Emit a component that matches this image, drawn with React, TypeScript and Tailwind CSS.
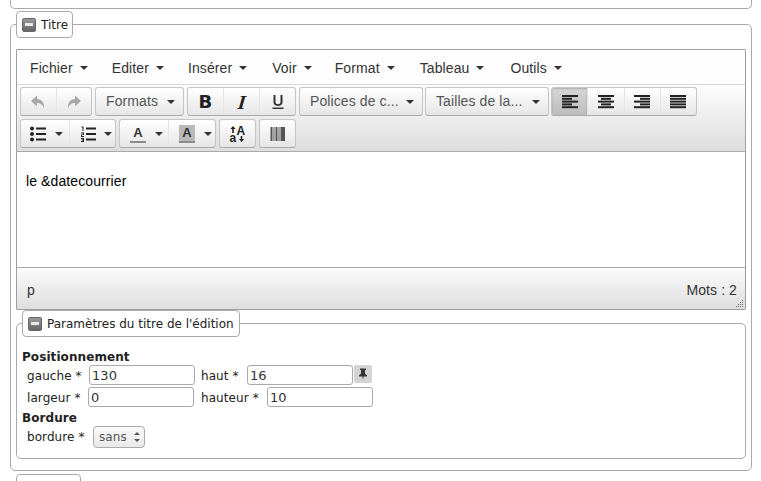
import React from 'react';

const dejavu = "font-['DejaVu_Sans',sans-serif]";
const btnFace = 'bg-gradient-to-b from-white to-[#e6e6e6]';

function Caret({ className = '' }: { className?: string }) {
    return <span className={`inline-block w-0 h-0 border-x-[4px] border-x-transparent border-t-[4px] border-t-[#333] ${className}`} />;
}

function Icon({ children, w = 16, h = 16, fill = '#333' }: { children: React.ReactNode; w?: number; h?: number; fill?: string }) {
    return (
        <svg width={w} height={h} viewBox={`0 0 ${w} ${h}`} fill={fill} className="block shrink-0">
            {children}
        </svg>
    );
}

function Group({ className = '', children }: { className?: string; children: React.ReactNode }) {
    return (
        <div className={`flex h-[29px] rounded-[3px] border border-[#c5c5c5] border-b-[#aaaaaa] overflow-hidden ${btnFace} ${className}`}>
            {children}
        </div>
    );
}

function Cell({ className = '', active = false, children }: { className?: string; active?: boolean; children: React.ReactNode }) {
    return (
        <div className={`flex items-center justify-center border-l border-l-[#e4e4e4] first:border-l-0 ${active ? 'bg-gradient-to-b from-[#d6d6d6] to-[#bcbcbc] shadow-[inset_0_1px_2px_rgba(0,0,0,0.2)]' : ''} ${className}`}>
            {children}
        </div>
    );
}

function ListButton({ text, w }: { text: string; w: string }) {
    return (
        <Group className={w}>
            <div className="flex flex-1 items-center justify-between pl-[10px] pr-[8px] text-[14px] text-[#555]">
                <span>{text}</span>
                <Caret />
            </div>
        </Group>
    );
}

function AlignIcon({ lines }: { lines: [number, number][] }) {
    return (
        <Icon>
            {lines.map(([x, w], i) => (
                <rect key={i} x={x} y={1 + i * 2.8} width={w} height={2} fill="#222" />
            ))}
        </Icon>
    );
}

function FieldsetLegend({ text, className = '' }: { text: string; className?: string }) {
    return (
        <legend className={`flex items-center h-[27px] border border-[#aaaaaa] rounded-[4px] bg-white pl-[5px] pr-[5px] text-[12px] text-[#222] whitespace-nowrap ${dejavu} ${className}`}>
            <span className="flex items-center justify-center w-[14px] h-[14px] shrink-0 rounded-[2px] border border-[#666] bg-gradient-to-b from-[#999999] to-[#666666] mr-[5px]">
                <span className="block w-[8px] h-[3px] bg-[#e8e8e8]" />
            </span>
            {text}
        </legend>
    );
}

function Field({ value, w }: { value: string; w: string }) {
    return (
        <input
            readOnly
            value={value}
            className={`h-[20px] ${w} border border-[#aaaaaa] rounded-[3px] bg-white px-[2px] text-[13px] text-[#333] outline-none ${dejavu}`}
        />
    );
}

export default function App() {
    return (
        <div className={`w-[761px] h-[481px] overflow-hidden bg-white pl-[10px] pr-[9px] ${dejavu}`}>
            <div className="h-[9px] border border-t-0 border-[#aaaaaa] rounded-b-[5px]" />

            <fieldset className="mt-[2px] h-[460px] border border-[#aaaaaa] rounded-[5px] px-[5px] pb-0 min-w-0">
                <FieldsetLegend text="Titre" className="w-[57px]" />

                {/* editeur */}
                <div className={`mt-[11px] h-[261px] flex flex-col border border-[#9e9e9e] rounded-[1px] font-['Liberation_Sans',sans-serif] tracking-[0.1px] text-[#333]`}>
                    <div className="h-[35px] shrink-0 flex items-center gap-[7px] pl-[13px] pt-[2px] border-b border-b-[#d9d9d9] bg-[#fdfdfd] text-[14px]">
                        {[
                            ['Fichier', 'mr-[17px]'],
                            ['Editer', 'mr-[17px]'],
                            ['Insérer', 'mr-[18px]'],
                            ['Voir', 'mr-[16px]'],
                            ['Format', 'mr-[18px]'],
                            ['Tableau', 'mr-[19px]'],
                            ['Outils', ''],
                        ].map(([label, margin]) => (
                            <span key={label} className={`flex items-center gap-[7px] ${margin}`}>
                                {label}
                                <Caret />
                            </span>
                        ))}
                    </div>

                    <div className="h-[67px] shrink-0 flex flex-col gap-[3px] pl-[3px] pt-[2px] bg-gradient-to-b from-[#fdfdfd] to-[#dddddd] border-b border-b-[#a9a9a9]">
                        <div className="flex gap-[3px]">
                            <Group className="w-[72px]">
                                <Cell className="flex-1">
                                    <Icon fill="#a8a8a8"><path d="M1 7 L7 1.5 V5 C11 5 14.5 8 14 14.5 C12.5 10.5 10.5 9 7 9 V12.5 Z" /></Icon>
                                </Cell>
                                <Cell className="flex-1">
                                    <Icon fill="#a8a8a8"><path d="M15 7 L9 1.5 V5 C5 5 1.5 8 2 14.5 C3.5 10.5 5.5 9 9 9 V12.5 Z" /></Icon>
                                </Cell>
                            </Group>
                            <ListButton text="Formats" w="w-[89px]" />
                            <Group className="w-[109px]">
                                <Cell className="flex-1 text-[18px] font-bold text-[#222]"><span className={dejavu}>B</span></Cell>
                                <Cell className="flex-1 text-[20px] font-bold italic text-[#222]"><span className="font-['Liberation_Serif',serif] -skew-x-6">I</span></Cell>
                                <Cell className="flex-1">
                                    <Icon><path d="M3.5 1 H5.5 V8 C5.5 11 10.5 11 10.5 8 V1 H12.5 V8.5 C12.5 13 3.5 13 3.5 8.5 Z M2.5 13.5 H13.5 V15 H2.5 Z" /></Icon>
                                </Cell>
                            </Group>
                            <ListButton text="Polices de c..." w="w-[124px]" />
                            <div className="-ml-[1px]">
                                <ListButton text="Tailles de la..." w="w-[124px]" />
                            </div>
                            <Group className="w-[146px] -ml-[1px]">
                                <Cell active className="flex-1"><AlignIcon lines={[[0, 16], [0, 10], [0, 16], [0, 10], [0, 16]]} /></Cell>
                                <Cell className="flex-1"><AlignIcon lines={[[0, 16], [3, 10], [0, 16], [3, 10], [0, 16]]} /></Cell>
                                <Cell className="flex-1"><AlignIcon lines={[[0, 16], [6, 10], [0, 16], [6, 10], [0, 16]]} /></Cell>
                                <Cell className="flex-1"><AlignIcon lines={[[0, 16], [0, 16], [0, 16], [0, 16], [0, 16]]} /></Cell>
                            </Group>
                        </div>
                        <div className="flex gap-[3px]">
                            <Group className="w-[96px]">
                                <Cell className="w-[48px] justify-start pl-[9px] gap-[9px]">
                                    <Icon>
                                        <circle cx="2" cy="2.5" r="2" fill="#222" /><circle cx="2" cy="8" r="2" fill="#222" /><circle cx="2" cy="13.5" r="2" fill="#222" />
                                        <rect x="6" y="1.5" width="10" height="2" fill="#222" /><rect x="6" y="7" width="10" height="2" fill="#222" /><rect x="6" y="12.5" width="10" height="2" fill="#222" />
                                    </Icon>
                                    <Caret />
                                </Cell>
                                <Cell className="flex-1 justify-start pl-[10px] gap-[8px]">
                                    <Icon>
                                        <path d="M1.5 0.5 H3.5 V5 H2.5 V1.5 H1.5 Z M1 6.5 H4 V9 H2 V10 H4 V11 H1 V8.5 H3 V7.5 H1 Z M1 12 H4 V16 H1 V15 H3 V14.5 H1.5 V13.5 H3 V13 H1 Z" fill="#222" />
                                        <rect x="6" y="1.5" width="10" height="2" fill="#222" /><rect x="6" y="7" width="10" height="2" fill="#222" /><rect x="6" y="12.5" width="10" height="2" fill="#222" />
                                    </Icon>
                                    <Caret />
                                </Cell>
                            </Group>
                            <Group className="w-[97px]">
                                <Cell className="w-[48px] justify-start pl-[10px] gap-[9px]">
                                    <span className="flex justify-center w-[16px] h-[18px] text-[13px] leading-[15px] font-bold text-[#333] border-b-2 border-b-[#8a8a8a]">A</span>
                                    <Caret />
                                </Cell>
                                <Cell className="flex-1 justify-start pl-[10px] gap-[9px]">
                                    <span className="flex justify-center w-[16px] h-[18px] text-[13px] leading-[15px] font-bold text-[#333] bg-[#b9b9b9] border-b-2 border-b-[#8a8a8a]">A</span>
                                    <Caret />
                                </Cell>
                            </Group>
                            <Group className="w-[37px]">
                                <Cell className="flex-1">
                                    <span className="relative block w-[18px] h-[18px] text-[12px] leading-[12px] font-bold text-[#222]">
                                        <span className="absolute left-[8px] top-[0px]">A</span>
                                        <span className="absolute left-[1px] top-[7px]">a</span>
                                        <span className="absolute left-0 top-[1px]">
                                            <Icon w={18} h={16} fill="#222">
                                                <path d="M4 0 L6.5 3 H4.8 V7 H3.2 V3 H1.5 Z M12.5 16 L15 13 H13.3 V10 H11.7 V13 H10 Z" />
                                            </Icon>
                                        </span>
                                    </span>
                                </Cell>
                            </Group>
                            <Group className="w-[37px]">
                                <Cell className="flex-1">
                                    <Icon>
                                        <rect x="0.5" y="1" width="2" height="14" fill="#555" /><rect x="3.5" y="1" width="1" height="14" fill="#555" /><rect x="5.5" y="1" width="2" height="14" fill="#555" />
                                        <rect x="8.5" y="1" width="1" height="14" fill="#555" /><rect x="10.5" y="1" width="4.5" height="14" fill="#555" />
                                    </Icon>
                                </Cell>
                            </Group>
                        </div>
                    </div>

                    <div className="flex-1 bg-white px-[9px] pt-[21px] text-[14px] leading-[16px] text-black">le &amp;datecourrier</div>

                    <div className="relative h-[42px] shrink-0 flex items-center justify-between pl-[10px] pr-[8px] pt-[4px] border-t border-t-[#a9a9a9] bg-gradient-to-b from-[#fbfbfb] to-[#dedede] text-[14px]">
                        <span>p</span>
                        <span>Mots : 2</span>
                        <svg width="9" height="9" viewBox="0 0 9 9" className="absolute right-[1px] bottom-[1px]" fill="#666">
                            <rect x="7" y="1" width="1" height="1" /><rect x="5" y="3" width="1" height="1" /><rect x="7" y="3" width="1" height="1" />
                            <rect x="3" y="5" width="1" height="1" /><rect x="5" y="5" width="1" height="1" /><rect x="7" y="5" width="1" height="1" />
                            <rect x="1" y="7" width="1" height="1" /><rect x="3" y="7" width="1" height="1" /><rect x="5" y="7" width="1" height="1" /><rect x="7" y="7" width="1" height="1" />
                        </svg>
                    </div>
                </div>

                {/* parametres */}
                <fieldset className="h-[149px] border border-[#aaaaaa] rounded-[5px] px-[5px] min-w-0">
                    <FieldsetLegend text="Paramètres du titre de l'édition" className="w-[218px]" />
                    <div className="text-[12px] text-[#222] tracking-[0.08px]">
                        <div className="mt-[12px] h-[16px] leading-[16px] font-bold">Positionnement</div>
                        <div className="flex items-center pl-[5px] h-[20px]">
                            <span className="w-[62px] pt-[1px]">gauche *</span>
                            <Field value="130" w="w-[106px]" />
                            <span className="ml-[6px] w-[46px] pt-[1px]">haut *</span>
                            <Field value="16" w="w-[106px]" />
                            <span className="ml-[1px] -mt-[2px] flex items-center justify-center w-[18px] h-[18px] rounded-[2px] bg-[#d4d4d4]">
                                <svg width="10" height="12" viewBox="0 0 10 12" fill="#333"><path d="M2 0.5 H8 V2 H7 V5.5 L9 7.5 V8.5 H5.6 L5 12 L4.4 8.5 H1 V7.5 L3 5.5 V2 H2 Z" /></svg>
                            </span>
                        </div>
                        <div className="flex items-center mt-[2px] pl-[5px] h-[20px]">
                            <span className="w-[61px] pt-[1px]">largeur *</span>
                            <Field value="0" w="w-[106px]" />
                            <span className="ml-[7px] w-[66px] pt-[1px]">hauteur *</span>
                            <Field value="10" w="w-[106px]" />
                        </div>
                        <div className="mt-[3px] h-[16px] leading-[16px] font-bold">Bordure</div>
                        <div className="flex items-center pl-[5px] h-[22px]">
                            <span className="w-[66px]">bordure *</span>
                            <span className="flex items-center justify-between w-[52px] h-[22px] border border-[#aaaaaa] rounded-[4px] bg-gradient-to-b from-[#fafafa] to-[#e9e9e9] pl-[5px] pr-[4px] text-[#555]">
                                sans
                                <span className="flex flex-col gap-[4px]">
                                    <span className="block w-0 h-0 border-x-[3px] border-x-transparent border-b-[3px] border-b-[#555]" />
                                    <span className="block w-0 h-0 border-x-[3px] border-x-transparent border-t-[3px] border-t-[#555]" />
                                </span>
                            </span>
                        </div>
                    </div>
                </fieldset>
            </fieldset>

            <div className="mt-[3px] ml-[6px] w-[65px] h-[20px] border border-[#aaaaaa] rounded-[4px] bg-white" />
        </div>
    );
}
